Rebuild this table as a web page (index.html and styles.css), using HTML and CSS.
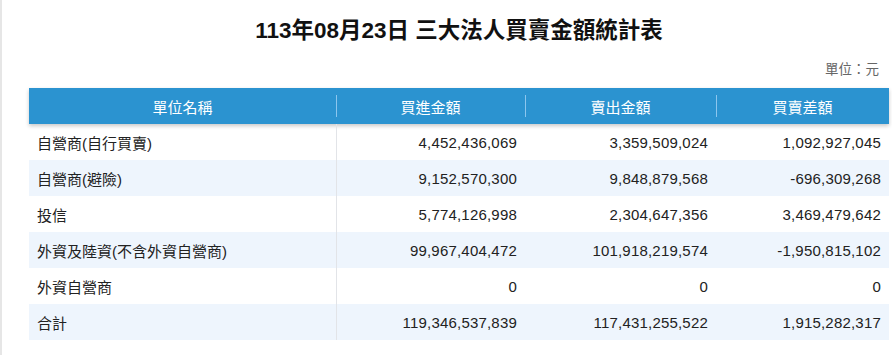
FILE: index.html
```html
<!DOCTYPE html>
<html lang="zh-Hant">
<head>
<meta charset="utf-8">
<title>三大法人買賣金額統計表</title>
<link rel="stylesheet" href="styles.css">
</head>
<body>
<div class="page">
  <div class="report">
    <h1 class="title">113年08月23日 三大法人買賣金額統計表</h1>
    <div class="unit">單位：元</div>
    <table class="stats">
      <colgroup>
        <col class="c-name"><col class="c-buy"><col class="c-sell"><col class="c-diff">
      </colgroup>
      <thead>
        <tr><th>單位名稱</th><th>買進金額</th><th>賣出金額</th><th>買賣差額</th></tr>
      </thead>
      <tbody>
        <tr><td>自營商(自行買賣)</td><td>4,452,436,069</td><td>3,359,509,024</td><td>1,092,927,045</td></tr>
        <tr><td>自營商(避險)</td><td>9,152,570,300</td><td>9,848,879,568</td><td>-696,309,268</td></tr>
        <tr><td>投信</td><td>5,774,126,998</td><td>2,304,647,356</td><td>3,469,479,642</td></tr>
        <tr><td>外資及陸資(不含外資自營商)</td><td>99,967,404,472</td><td>101,918,219,574</td><td>-1,950,815,102</td></tr>
        <tr><td>外資自營商</td><td>0</td><td>0</td><td>0</td></tr>
        <tr><td>合計</td><td>119,346,537,839</td><td>117,431,255,522</td><td>1,915,282,317</td></tr>
      </tbody>
    </table>
  </div>
</div>
</body>
</html>
```

FILE: styles.css
```css
html, body {
  margin: 0;
  padding: 0;
  background: #fff;
}
body {
  font-family: "Liberation Sans", "Noto Sans CJK TC", Arial, sans-serif;
  color: #222;
}
.page {
  border-left: 2px solid #e6e6e6;
  min-height: 100vh;
  box-sizing: border-box;
  padding: 0 3px 0 27px;
}
.report {
  width: 860px;
}
.title {
  margin: 0;
  padding-top: 16px;
  height: 30px;
  line-height: 30px;
  font-size: 22.5px;
  font-weight: bold;
  text-align: center;
  color: #111;
}
.unit {
  margin-top: 14px;
  padding-right: 10px;
  text-align: right;
  font-size: 13.5px;
  line-height: 20px;
  color: #666;
}
.stats {
  margin-top: 8px;
  width: 860px;
  border-collapse: collapse;
  table-layout: fixed;
  font-size: 15px;
}
.c-name { width: 307px; }
.c-buy { width: 189px; }
.c-sell { width: 191px; }
.c-diff { width: 173px; }
.stats thead tr {
  background: #2b93d0;
  box-shadow: 0 2px 4px rgba(0, 0, 0, 0.22);
}
.stats th {
  position: relative;
  height: 36px;
  padding: 0;
  color: #fff;
  font-weight: normal;
  text-align: center;
}
.stats th + th::before {
  content: "";
  position: absolute;
  left: 0;
  top: 7px;
  width: 1px;
  height: 22px;
  background: #8cc6ee;
}
.stats td {
  height: 36px;
  padding: 0 8px;
  text-align: right;
  letter-spacing: 0.2px;
  white-space: nowrap;
}
.stats td:first-child {
  text-align: left;
  letter-spacing: 0;
  border-right: 1px solid #e2e4e8;
}
.stats tbody tr:nth-child(even) {
  background: #eef5fd;
}
```
